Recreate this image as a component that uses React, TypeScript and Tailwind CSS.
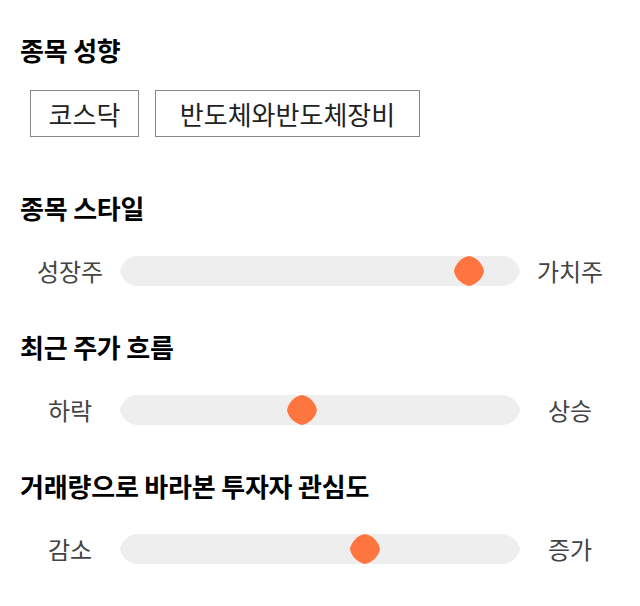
import React from 'react'

const sliders = [
  { title: '종목 스타일', left: '성장주', right: '가치주', value: 87.25 },
  { title: '최근 주가 흐름', left: '하락', right: '상승', value: 45.5 },
  { title: '거래량으로 바라본 투자자 관심도', left: '감소', right: '증가', value: 61.25 },
]

function Track({ value }: { value: number }) {
  return (
    <div className="relative h-[30px] w-[400px]">
      <svg width="400" height="30" viewBox="0 0 400 30" className="block">
        <path
          d="M0 15 A19 19 0 0 1 19 0 H381 A19 19 0 0 1 400 15 A19 19 0 0 1 381 30 H19 A19 19 0 0 1 0 15 Z"
          fill="#eeeeee"
        />
      </svg>
      <svg
        width="30"
        height="30"
        viewBox="0 0 30 30"
        className="absolute top-0 -ml-[15px]"
        style={{ left: `${value}%` }}
      >
        <path
          d="M15 0 A19 19 0 0 1 30 15 A19 19 0 0 1 15 30 A19 19 0 0 1 0 15 A19 19 0 0 1 15 0 Z"
          fill="#ff7540"
        />
      </svg>
    </div>
  )
}

export default function App() {
  return (
    <div
      className="w-[640px] bg-white px-5 pt-[34px] text-black"
      style={{ fontFamily: '"Noto Sans CJK KR", "Noto Sans", sans-serif' }}
    >
      <h2 className="text-[26px] font-bold leading-[32px] tracking-[-0.2px]">종목 성향</h2>
      <div className="mt-6 ml-[10px] flex gap-4">
        <div className="flex h-[47px] w-[109px] items-center justify-center border border-[#888] text-[26px] text-[#222]">
          코스닥
        </div>
        <div className="flex h-[47px] w-[265px] items-center justify-center border border-[#888] text-[26px] text-[#222]">
          반도체와반도체장비
        </div>
      </div>

      {sliders.map((s, i) => (
        <div key={s.title} className={i === 0 ? 'mt-[55px]' : 'mt-[45px]'}>
          <h2 className="text-[26px] font-bold leading-[32px] tracking-[-0.2px]">{s.title}</h2>
          <div className="mt-[32px] flex items-center">
            <div className="w-[100px] text-center text-[24px] leading-[30px] text-[#444]">{s.left}</div>
            <Track value={s.value} />
            <div className="w-[100px] text-center text-[24px] leading-[30px] text-[#444]">{s.right}</div>
          </div>
        </div>
      ))}
    </div>
  )
}
